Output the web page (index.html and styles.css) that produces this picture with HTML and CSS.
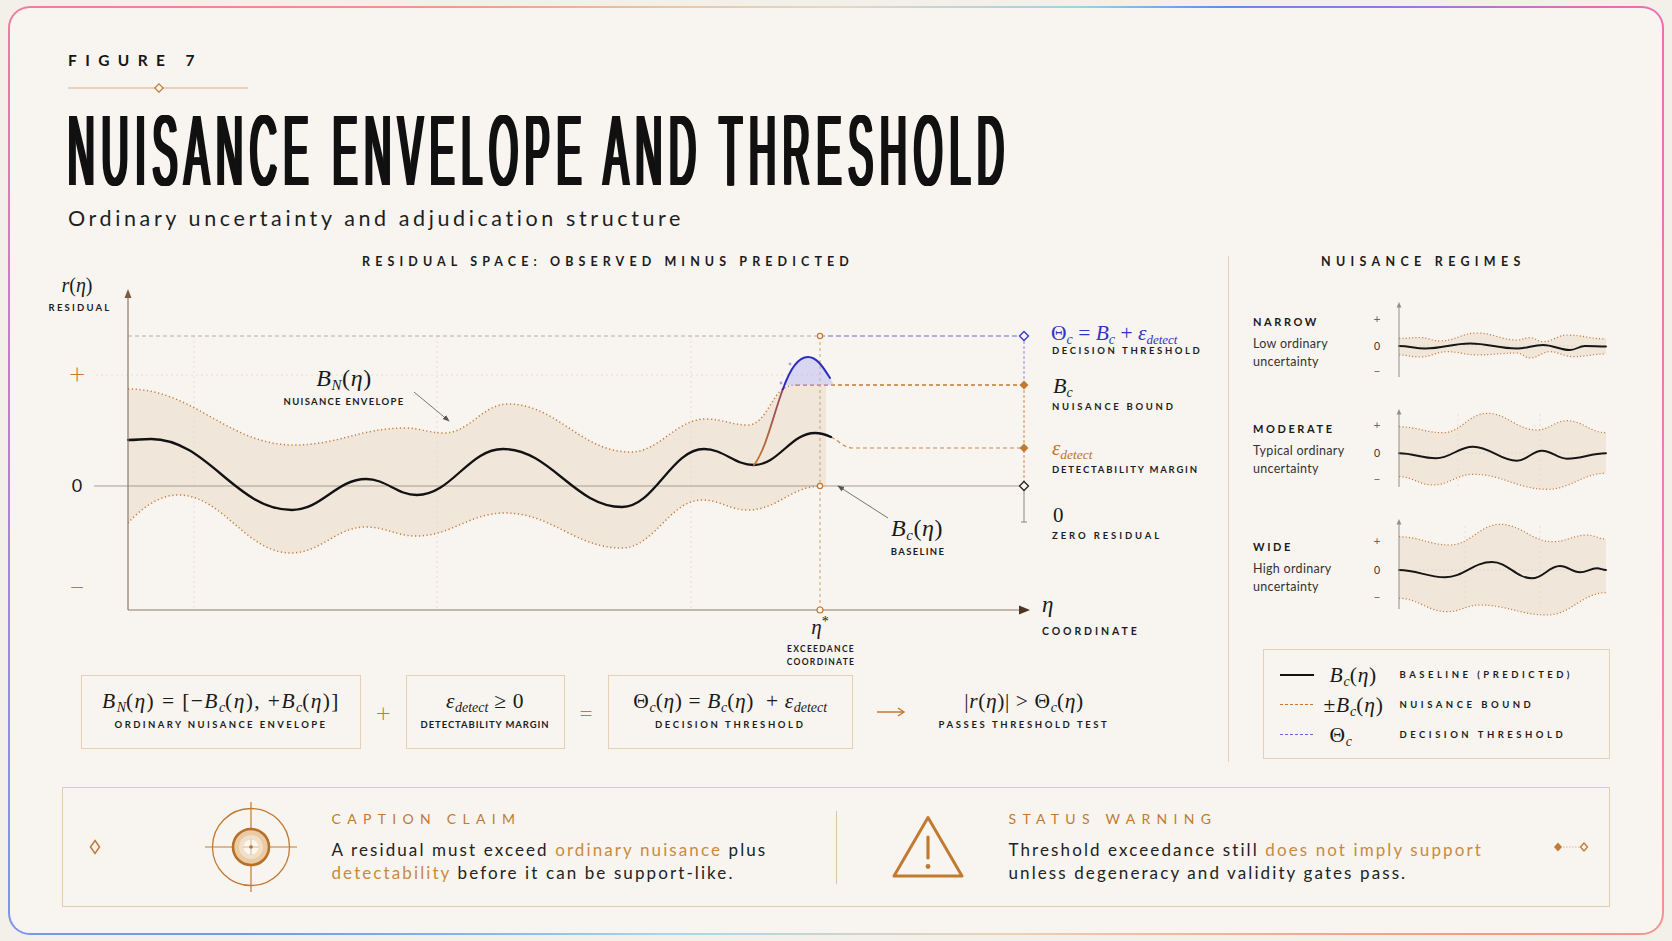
FILE: index.html
```html
<!DOCTYPE html>
<html lang="en">
<head>
<meta charset="utf-8">
<title>Figure 7 — Nuisance Envelope and Threshold</title>
<link rel="stylesheet" href="styles.css">
</head>
<body>
<div class="frame">
  <header class="head">
    <div class="fig-label">FIGURE 7</div>
    <svg class="ornament" width="180" height="10" viewBox="0 0 180 10">
      <line x1="0" y1="5" x2="180" y2="5" stroke="#d8ae80" stroke-width="1.2"/>
      <path d="M91 0.8 L95.2 5 L91 9.2 L86.8 5 Z" fill="#f8f5f1" stroke="#c27a30" stroke-width="1.2"/>
    </svg>
    <h1 class="title">NUISANCE ENVELOPE AND THRESHOLD</h1>
    <p class="subtitle">Ordinary uncertainty and adjudication structure</p>
  </header>

  <main class="main">
    <section class="left">
      <h2 class="chart-title">RESIDUAL SPACE: OBSERVED MINUS PREDICTED</h2>
      <svg class="chart" width="1190" height="398" viewBox="30 272 1190 398">
        <defs>
          <linearGradient id="exg" gradientUnits="userSpaceOnUse" x1="754" y1="465" x2="783" y2="390">
            <stop offset="0" stop-color="#c77a2c"/>
            <stop offset="1" stop-color="#8c4262"/>
          </linearGradient>
          <marker id="ah" viewBox="0 0 8 8" refX="7" refY="4" markerWidth="7" markerHeight="7" markerUnits="userSpaceOnUse" orient="auto">
            <path d="M0 1 L8 4 L0 7 Z" fill="#555"/>
          </marker>
        </defs>

        <g class="grid">
          <line x1="194" y1="336" x2="194" y2="610"/>
          <line x1="437" y1="336" x2="437" y2="610"/>
          <line x1="691" y1="336" x2="691" y2="610"/>
          <line x1="96" y1="375" x2="820" y2="375"/>
        </g>

        <path class="env-fill" d="M128 389 C194.4 389 227.6 445 294 445 C338.4 445 360.6 428 405 428 C420.6 428 428.4 433 444 433 C469.6 433 482.4 404 508 404 C556.8 404 581.2 452 630 452 C660.4 452 675.6 419 706 419 C722.8 419 731.2 425 748 425 C765 425 772 395 783 389 C787 386.5 790 385 796 385 L826 385 L826 486 L821 486 C791.8 486 777.2 510 748 510 C729.6 510 720.4 500 702 500 C670 500 654 548 622 548 C575.2 548 551.8 513 505 513 C469.4 513 451.6 536 416 536 C396 536 386 527 366 527 C336 527 321 553 291 553 C245.8 553 223.2 495 178 495 C158 495 140 510 128 523 Z"/>

        <line class="zero" x1="94" y1="486" x2="1024" y2="486"/>
        <line class="thr-gray" x1="128" y1="336" x2="820" y2="336"/>
        <line class="thr-blue" x1="820" y1="336" x2="1021" y2="336"/>

        <line class="rv-blue" x1="1024" y1="336" x2="1024" y2="385"/>
        <line class="rv-orange" x1="1024" y1="385" x2="1024" y2="486"/>
        <line class="rv-gray" x1="1024" y1="486" x2="1024" y2="522"/>
        <line class="rv-gray" x1="1021" y1="522" x2="1027" y2="522"/>

        <line class="bound" x1="796" y1="385" x2="1021" y2="385"/>
        <path class="eps" d="M831 437 C838 440 844 448 852 448 L1021 448"/>
        <line class="estar" x1="820" y1="336" x2="820" y2="610"/>

        <path class="env" d="M128 389 C194.4 389 227.6 445 294 445 C338.4 445 360.6 428 405 428 C420.6 428 428.4 433 444 433 C469.6 433 482.4 404 508 404 C556.8 404 581.2 452 630 452 C660.4 452 675.6 419 706 419 C722.8 419 731.2 425 748 425 C765 425 772 395 783 389 C787 386.5 790 385 796 385"/>
        <path class="env" d="M128 523 C140 510 158 495 178 495 C223.2 495 245.8 553 291 553 C321 553 336 527 366 527 C386 527 396 536 416 536 C451.6 536 469.4 513 505 513 C551.8 513 575.2 548 622 548 C654 548 670 500 702 500 C720.4 500 729.6 510 748 510 C777.2 510 791.8 486 821 486"/>

        <path class="base" d="M128 440 C137.2 440 141.8 439 151 439 C207.4 439 235.6 510 292 510 C321.6 510 336.4 479 366 479 C386.4 479 396.6 495 417 495 C451.4 495 468.6 449 503 449 C550.6 449 574.4 507 622 507 C654.8 507 671.2 449 704 449 C724 449 734 465 754 465 C778.4 465 790.6 433 815 433 C821.4 433 824.6 434 831 437"/>

        <path class="ex-fill" d="M783 389 C790 369 798 357 808 357 C817 357 823 367 830 378 L834 385 L785 385 Z"/>
        <path class="ex-rise" d="M754 465 C766 450 774 412 783 389"/>
        <path class="ex-blue" d="M783 389 C790 369 798 357 808 357 C817 357 823 367 830 378"/>
        <circle cx="790" cy="364" r="1.4" class="bdot"/>
        <circle cx="781" cy="383" r="1.4" class="bdot"/>

        <line class="axis" x1="128" y1="296" x2="128" y2="610"/>
        <path d="M124.5 298 L128 289 L131.5 298 Z" fill="#7b5c3e"/>
        <line class="axis" x1="128" y1="610" x2="1021" y2="610"/>
        <path d="M1019 605.5 L1030 610 L1019 614.5 Z" fill="#4a3526"/>

        <circle class="mk-o" cx="820" cy="336" r="2.6"/>
        <circle class="mk-o" cx="820" cy="486" r="2.6"/>
        <circle class="mk-o" cx="820" cy="610" r="3"/>
        <path d="M1024 331.5 L1028.5 336 L1024 340.5 L1019.5 336 Z" fill="#f8f5f1" stroke="#3a3acc" stroke-width="1.4"/>
        <path d="M1024 380.5 L1028.5 385 L1024 389.5 L1019.5 385 Z" fill="#c27a30"/>
        <path d="M1024 443.5 L1028.5 448 L1024 452.5 L1019.5 448 Z" fill="#c27a30"/>
        <path d="M1024 481.5 L1028.5 486 L1024 490.5 L1019.5 486 Z" fill="#f8f5f1" stroke="#222" stroke-width="1.3"/>

        <line class="ann" x1="414" y1="392" x2="449" y2="421" marker-end="url(#ah)"/>
        <line class="ann" x1="888" y1="518" x2="838" y2="486" marker-end="url(#ah)"/>

        <text class="m" x="77" y="292" text-anchor="middle" font-size="20">r<tspan class="mu">(</tspan>η<tspan class="mu">)</tspan></text>
        <text class="lbl" x="80" y="310.5" text-anchor="middle">RESIDUAL</text>
        <text class="sign" x="77" y="384" text-anchor="middle">+</text>
        <text class="zero-num" x="77" y="492" text-anchor="middle">0</text>
        <text class="sign" x="77" y="597" text-anchor="middle">−</text>

        <text class="m wide" x="344" y="386" text-anchor="middle" font-size="24">B<tspan font-size="15" dy="4">N</tspan><tspan class="mu" dy="-4">(</tspan>η<tspan class="mu">)</tspan></text>
        <text class="lbl tight" x="344" y="404.5" text-anchor="middle">NUISANCE ENVELOPE</text>

        <text class="m wide" x="917" y="536" text-anchor="middle" font-size="24">B<tspan font-size="15" dy="4">c</tspan><tspan class="mu" dy="-4">(</tspan>η<tspan class="mu">)</tspan></text>
        <text class="lbl tight" x="918" y="554.5" text-anchor="middle">BASELINE</text>

        <text class="m blue" x="1051" y="340" font-size="21.5"><tspan class="mu">Θ</tspan><tspan font-size="14" dy="4">c</tspan><tspan class="mu" dy="-4"> = </tspan>B<tspan font-size="14" dy="4">c</tspan><tspan class="mu" dy="-4"> + </tspan>ε<tspan font-size="13" dy="4">detect</tspan></text>
        <text class="lbl ls-dec" x="1052" y="353.5">DECISION THRESHOLD</text>
        <text class="m" x="1053" y="393" font-size="22">B<tspan font-size="14" dy="4">c</tspan></text>
        <text class="lbl ls-nb" x="1052" y="409.5">NUISANCE BOUND</text>
        <text class="m orange" x="1052" y="455" font-size="21">ε<tspan font-size="13.5" dy="4">detect</tspan></text>
        <text class="lbl ls-dm" x="1052" y="472.5">DETECTABILITY MARGIN</text>
        <text class="serif-num" x="1053" y="522">0</text>
        <text class="lbl ls-zr" x="1052" y="538.5">ZERO RESIDUAL</text>
        <text class="m" x="1042" y="612" font-size="23">η</text>
        <text class="lbl big" x="1042" y="635">COORDINATE</text>

        <text class="m" x="820" y="634" text-anchor="middle" font-size="21">η<tspan class="mu" font-size="14" dy="-8">*</tspan></text>
        <text class="lbl sm" x="821" y="652" text-anchor="middle">EXCEEDANCE</text>
        <text class="lbl sm" x="821" y="665" text-anchor="middle">COORDINATE</text>
      </svg>

      <div class="formula-row">
        <div class="fbox w1">
          <div class="fx"><i>B</i><sub>N</sub>(<i>η</i>) = [−<i>B</i><sub>c</sub>(<i>η</i>), +<i>B</i><sub>c</sub>(<i>η</i>)]</div>
          <div class="flabel">ORDINARY NUISANCE ENVELOPE</div>
        </div>
        <div class="op">+</div>
        <div class="fbox w2">
          <div class="fx"><i>ε</i><sub>detect</sub> ≥ 0</div>
          <div class="flabel">DETECTABILITY MARGIN</div>
        </div>
        <div class="op op-eq">=</div>
        <div class="fbox w3">
          <div class="fx">Θ<sub>c</sub>(<i>η</i>) = <i>B</i><sub>c</sub>(<i>η</i>) &nbsp;+ <i>ε</i><sub>detect</sub></div>
          <div class="flabel">DECISION THRESHOLD</div>
        </div>
        <div class="op-arrow">
          <svg width="30" height="12" viewBox="0 0 30 12"><line x1="1" y1="6" x2="27" y2="6" stroke="#c27a30" stroke-width="1.5"/><path d="M22 2 L28 6 L22 10" fill="none" stroke="#c27a30" stroke-width="1.5"/></svg>
        </div>
        <div class="fresult">
          <div class="fx">|<i>r</i>(<i>η</i>)| &gt; Θ<sub>c</sub>(<i>η</i>)</div>
          <div class="flabel">PASSES THRESHOLD TEST</div>
        </div>
      </div>
    </section>

    <div class="vdivider"></div>

    <section class="right">
      <h2 class="regimes-title">NUISANCE REGIMES</h2>

      <div class="regime r1">
        <div class="reg-text">
          <div class="reg-name">NARROW</div>
          <div class="reg-desc">Low ordinary<br>uncertainty</div>
        </div>
        <svg class="mini" width="240" height="106" viewBox="0 0 240 106">
          <path class="mfill" d="M29 40.3 C37.4 40.3 41.6 39.5 50 39.5 C58 39.5 62 43 70 43 C84.8 43 92.2 35 107 35 C123 35 131 42 147 42 C152.2 42 154.8 39.7 160 39.7 C165.2 39.7 167.8 43.7 173 43.7 C182.6 43.7 187.4 37 197 37 C212.6 37 220.4 41 236 41 L236 56 C222.8 56 216.2 58.7 203 58.7 C193.8 58.7 189.2 53.7 180 53.7 C172 53.7 168 60 160 60 C154.8 60 152.2 55 147 55 C131 55 123 57 107 57 C95 57 89 53.7 77 53.7 C66.2 53.7 60.8 59 50 59 C41.6 59 37.4 57 29 57 Z"/>
          <line class="mzero" x1="29" y1="48" x2="236" y2="48"/>
          <path class="menv" d="M29 40.3 C37.4 40.3 41.6 39.5 50 39.5 C58 39.5 62 43 70 43 C84.8 43 92.2 35 107 35 C123 35 131 42 147 42 C152.2 42 154.8 39.7 160 39.7 C165.2 39.7 167.8 43.7 173 43.7 C182.6 43.7 187.4 37 197 37 C212.6 37 220.4 41 236 41"/>
          <path class="menv" d="M29 57 C37.4 57 41.6 59 50 59 C60.8 59 66.2 53.7 77 53.7 C89 53.7 95 57 107 57 C123 57 131 55 147 55 C152.2 55 154.8 60 160 60 C168 60 172 53.7 180 53.7 C189.2 53.7 193.8 58.7 203 58.7 C216.2 58.7 222.8 56 236 56"/>
          <path class="mbase" d="M29 48 C39.4 48 44.6 50.5 55 50.5 C73 50.5 82 45.5 100 45.5 C118.8 45.5 128.2 50.5 147 50.5 C157.4 50.5 162.6 47 173 47 C183.8 47 189.2 52 200 52 C206 52 209 48 215 48 C223.4 48 227.6 48.5 236 48.5"/>
          <line class="maxis" x1="29" y1="8" x2="29" y2="79"/>
          <path class="marrow" d="M26.6 9.5 L29 4 L31.4 9.5 Z"/>
          <text class="msign" x="7" y="25" text-anchor="middle">+</text>
          <text class="mnum" x="7" y="52" text-anchor="middle">0</text>
          <text class="msign" x="7" y="77" text-anchor="middle">−</text>
        </svg>
      </div>

      <div class="regime r2">
        <div class="reg-text">
          <div class="reg-name">MODERATE</div>
          <div class="reg-desc">Typical ordinary<br>uncertainty</div>
        </div>
        <svg class="mini" width="240" height="110" viewBox="0 0 240 110">
          <path class="mfill" d="M29 22.7 C46.6 22.7 55.4 28.7 73 28.7 C90.6 28.7 99.4 9.3 117 9.3 C137 9.3 147 26 167 26 C179 26 185 16.7 197 16.7 C212.6 16.7 220.4 28.7 236 28.7 L236 69.3 C212.4 69.3 200.6 85.3 177 85.3 C147.4 85.3 132.6 70.3 103 70.3 C87 70.3 79 81 63 81 C49.4 81 42.6 72.7 29 72.7 Z"/>
          <line class="mzero" x1="29" y1="49" x2="236" y2="49"/>
          <line class="mgrid" x1="88" y1="10" x2="88" y2="84"/>
          <line class="mgrid" x1="170" y1="10" x2="170" y2="84"/>
          <path class="menv" d="M29 22.7 C46.6 22.7 55.4 28.7 73 28.7 C90.6 28.7 99.4 9.3 117 9.3 C137 9.3 147 26 167 26 C179 26 185 16.7 197 16.7 C212.6 16.7 220.4 28.7 236 28.7"/>
          <path class="menv" d="M29 72.7 C42.6 72.7 49.4 81 63 81 C79 81 87 70.3 103 70.3 C132.6 70.3 147.4 85.3 177 85.3 C200.6 85.3 212.4 69.3 236 69.3"/>
          <path class="mbase" d="M29 49.3 C43.8 49.3 51.2 54.3 66 54.3 C80.8 54.3 88.2 42.7 103 42.7 C120.6 42.7 129.4 56.7 147 56.7 C157 56.7 162 46.7 172 46.7 C182 46.7 187 54.7 197 54.7 C212.6 54.7 220.4 49.3 236 49.3"/>
          <line class="maxis" x1="29" y1="9" x2="29" y2="83"/>
          <path class="marrow" d="M26.6 10.5 L29 5 L31.4 10.5 Z"/>
          <text class="msign" x="7" y="25" text-anchor="middle">+</text>
          <text class="mnum" x="7" y="53" text-anchor="middle">0</text>
          <text class="msign" x="7" y="79" text-anchor="middle">−</text>
        </svg>
      </div>

      <div class="regime r3">
        <div class="reg-text">
          <div class="reg-name">WIDE</div>
          <div class="reg-desc">High ordinary<br>uncertainty</div>
        </div>
        <svg class="mini" width="240" height="106" viewBox="0 0 240 106">
          <path class="mfill" d="M29 22.7 C49.4 22.7 59.6 31 80 31 C100 31 110 10.3 130 10.3 C151.2 10.3 161.8 27.7 183 27.7 C196.6 27.7 203.4 21 217 21 C224.6 21 228.4 25 236 25 L236 78.7 C212.4 78.7 200.6 101 177 101 C150.2 101 136.8 91 110 91 C96.8 91 90.2 97.7 77 97.7 C57.8 97.7 48.2 84.3 29 84.3 Z"/>
          <line class="mzero" x1="29" y1="56" x2="236" y2="56"/>
          <line class="mgrid" x1="95" y1="12" x2="95" y2="96"/>
          <line class="mgrid" x1="170" y1="12" x2="170" y2="96"/>
          <path class="menv" d="M29 22.7 C49.4 22.7 59.6 31 80 31 C100 31 110 10.3 130 10.3 C151.2 10.3 161.8 27.7 183 27.7 C196.6 27.7 203.4 21 217 21 C224.6 21 228.4 25 236 25"/>
          <path class="menv" d="M29 84.3 C48.2 84.3 57.8 97.7 77 97.7 C90.2 97.7 96.8 91 110 91 C136.8 91 150.2 101 177 101 C200.6 101 212.4 78.7 236 78.7"/>
          <path class="mbase" d="M29 56 C47.4 56 56.6 63.3 75 63.3 C93.8 63.3 103.2 48 122 48 C138 48 146 64.3 162 64.3 C173.2 64.3 178.8 52 190 52 C198 52 202 58.3 210 58.3 C216.8 58.3 220.2 54.3 227 54.3 C230.6 54.3 232.4 56 236 56"/>
          <line class="maxis" x1="29" y1="9" x2="29" y2="95"/>
          <path class="marrow" d="M26.6 10.5 L29 5 L31.4 10.5 Z"/>
          <text class="msign" x="7" y="31" text-anchor="middle">+</text>
          <text class="mnum" x="7" y="60" text-anchor="middle">0</text>
          <text class="msign" x="7" y="87" text-anchor="middle">−</text>
        </svg>
      </div>

      <div class="legend">
        <div class="lg-sample solid"></div>
        <div class="lg-math"><i>B</i><sub>c</sub>(<i>η</i>)</div>
        <div class="lg-label">BASELINE (PREDICTED)</div>
        <div class="lg-sample dotted"></div>
        <div class="lg-math pm">±<i>B</i><sub>c</sub>(<i>η</i>)</div>
        <div class="lg-label">NUISANCE BOUND</div>
        <div class="lg-sample dashed"></div>
        <div class="lg-math">Θ<sub>c</sub></div>
        <div class="lg-label">DECISION THRESHOLD</div>
      </div>
    </section>
  </main>

  <footer class="caption">
    <svg class="cap-diamond" width="12" height="16" viewBox="0 0 12 16">
      <path d="M6 1.5 L10.5 8 L6 14.5 L1.5 8 Z" fill="none" stroke="#c27a30" stroke-width="1.5"/>
    </svg>
    <svg class="target" width="100" height="100" viewBox="0 0 100 100">
      <circle cx="50" cy="50" r="38.5" fill="none" stroke="#c27a30" stroke-width="1.3"/>
      <line x1="4" y1="50" x2="96" y2="50" stroke="#c27a30" stroke-width="1.2"/>
      <line x1="50" y1="5" x2="50" y2="95" stroke="#c27a30" stroke-width="1.2"/>
      <circle cx="50" cy="50" r="18" fill="#e9cba5" stroke="#b86f28" stroke-width="2.6"/>
      <circle cx="50" cy="50" r="12" fill="#f1dfc8"/>
      <circle cx="50" cy="50" r="7.5" fill="#fbf7f1"/>
      <line x1="42" y1="50" x2="58" y2="50" stroke="#d6a878" stroke-width="0.8"/>
      <line x1="50" y1="42" x2="50" y2="58" stroke="#d6a878" stroke-width="0.8"/>
      <circle cx="50" cy="50" r="1.8" fill="#b86f28"/>
    </svg>
    <div class="cap-text c1">
      <div class="cap-label">CAPTION CLAIM</div>
      <p class="cap-body">A residual must exceed <span class="hl">ordinary nuisance</span> plus<br><span class="hl">detectability</span> before it can be support-like.</p>
    </div>
    <div class="cap-div"></div>
    <svg class="warn" width="72" height="64" viewBox="0 0 72 64">
      <path d="M36 2.5 L70 61 L2 61 Z" fill="none" stroke="#c27a30" stroke-width="3" stroke-linejoin="round"/>
      <line x1="36" y1="22" x2="36" y2="43" stroke="#c27a30" stroke-width="3.2" stroke-linecap="round"/>
      <circle cx="36" cy="51.5" r="2.4" fill="#c27a30"/>
    </svg>
    <div class="cap-text c2">
      <div class="cap-label">STATUS WARNING</div>
      <p class="cap-body">Threshold exceedance still <span class="hl">does not imply support</span><br>unless degeneracy and validity gates pass.</p>
    </div>
    <svg class="cap-orn" width="40" height="12" viewBox="0 0 40 12">
      <path d="M6 1.5 L10 6 L6 10.5 L2 6 Z" fill="#c27a30"/>
      <line x1="11" y1="6" x2="28" y2="6" stroke="#d9b48a" stroke-width="1" stroke-dasharray="1.5 1.5"/>
      <path d="M32 2 L35.5 6 L32 10 L28.5 6 Z" fill="#f8f5f1" stroke="#c27a30" stroke-width="1.3"/>
    </svg>
  </footer>
</div>
</body>
</html>
```

FILE: styles.css
```css
* { box-sizing: border-box; }

html, body { margin: 0; padding: 0; }

body {
  background: #f3efe9;
  font-family: Lato, "Open Sans", "DejaVu Sans", sans-serif;
  color: #1c1c1c;
}

.frame {
  margin: 6px 8px;
  width: 1656px;
  height: 929px;
  border: 2px solid transparent;
  border-radius: 22px;
  overflow: hidden;
  background:
    linear-gradient(#f8f5f1, #f8f5f1) padding-box,
    conic-gradient(from 0deg at 50% 50%,
      #e8d6c2 0deg, #9ad3ea 28deg, #5f8fe6 40deg, #9277e2 50deg, #ec6fb2 60deg,
      #f080b4 100deg, #f09c86 125deg, #ead2b8 160deg, #a9d6ea 200deg,
      #6f9cee 232deg, #9f84e6 262deg, #ec77a6 295deg, #f09a88 320deg,
      #ebc6a4 340deg, #e8d6c2 360deg) border-box;
}

/* ---------- header ---------- */
.head { padding: 42px 0 0 58px; }

.fig-label {
  font-size: 15.5px;
  line-height: 20px;
  font-weight: 700;
  letter-spacing: 8.4px;
  color: #161616;
}

.ornament { display: block; margin-top: 13px; }

.title {
  margin: 7px 0 0 -2px;
  font-family: "Liberation Sans", Arial, sans-serif;
  font-weight: 400;
  font-size: 100px;
  line-height: 100px;
  letter-spacing: 19px;
  color: #111;
  white-space: nowrap;
  transform: scaleX(0.37);
  transform-origin: 0 0;
  text-shadow: 2px 0 0 #111, 4px 0 0 #111, 6px 0 0 #111, 8px 0 0 #111, 10px 0 0 #111;
}

.subtitle {
  margin: 5px 0 0;
  font-size: 21.5px;
  line-height: 26px;
  letter-spacing: 3.6px;
  color: #1e1e1e;
  white-space: nowrap;
}

/* ---------- main ---------- */
.main {
  display: flex;
  margin: 23px 0 0 20px;
  height: 508px;
}

.left {
  width: 1198px;
  display: flex;
  flex-direction: column;
}

.chart-title, .regimes-title {
  margin: 0;
  font-size: 12.5px;
  line-height: 16px;
  font-weight: 700;
  letter-spacing: 5.1px;
  color: #1c1c1c;
  white-space: nowrap;
}

.chart-title { text-align: center; padding-right: 42px; }

.chart { display: block; margin-top: 2px; }

/* chart svg styles */
.grid line { stroke: #e6ddd2; stroke-width: 1; stroke-dasharray: 2 3; }
.env-fill { fill: #ecdccb; opacity: 0.6; }
.zero { stroke: #a59d94; stroke-width: 1; }
.thr-gray { stroke: #b5aca3; stroke-width: 1; stroke-dasharray: 4 3; }
.thr-blue { stroke: #6a6ae0; stroke-width: 1.2; stroke-dasharray: 5 3; }
.rv-blue { stroke: #8b8bdc; stroke-width: 1; stroke-dasharray: 3 2; }
.rv-orange { stroke: #c98a4a; stroke-width: 1; stroke-dasharray: 3 2; }
.rv-gray { stroke: #888; stroke-width: 1; }
.bound { stroke: #c27a30; stroke-width: 1.3; stroke-dasharray: 4 3; }
.eps { fill: none; stroke: #c98a4a; stroke-width: 1.2; stroke-dasharray: 4 3; }
.estar { stroke: #c9a070; stroke-width: 1; stroke-dasharray: 3 3; }
.env { fill: none; stroke: #c9772f; stroke-width: 1.5; stroke-dasharray: 1.2 2.6; }
.base { fill: none; stroke: #121212; stroke-width: 2.3; stroke-linecap: round; }
.ex-fill { fill: #b8b8f0; opacity: 0.5; }
.ex-rise { fill: none; stroke: url(#exg); stroke-width: 1.8; stroke-linecap: round; }
.ex-blue { fill: none; stroke: #2b2bc0; stroke-width: 2; stroke-linecap: round; }
.bdot { fill: #8080e0; opacity: 0.7; }
.axis { stroke: #8c7a69; stroke-width: 1.2; }
.mk-o { fill: #f8f5f1; stroke: #c27a30; stroke-width: 1.2; }
.ann { stroke: #555; stroke-width: 0.8; }

.m {
  font-family: "Liberation Serif", "DejaVu Serif", serif;
  font-style: italic;
  fill: #1a1a1a;
}
.m.wide { letter-spacing: 0.6px; }
.mu { font-style: normal; }
.blue { fill: #3434c4; }
.orange { fill: #c0722a; }

.lbl {
  font-family: Lato, "Open Sans", sans-serif;
  font-weight: 700;
  font-size: 9.5px;
  letter-spacing: 2.2px;
  fill: #1d1d1d;
}
.lbl.tight { letter-spacing: 1.3px; }
.lbl.big { font-size: 10.5px; letter-spacing: 2.9px; }
.lbl.sm { font-size: 8.5px; letter-spacing: 1.3px; }
.lbl.ls-dec { letter-spacing: 2.6px; }
.lbl.ls-nb { letter-spacing: 2.7px; }
.lbl.ls-dm { letter-spacing: 1.8px; }
.lbl.ls-zr { letter-spacing: 2.9px; }

.sign {
  font-family: Lato, sans-serif;
  font-weight: 300;
  font-size: 28px;
  fill: #c27a30;
}
.zero-num {
  font-family: Lato, sans-serif;
  font-size: 18px;
  fill: #1a1a1a;
}
.serif-num {
  font-family: "Liberation Serif", "DejaVu Serif", serif;
  font-size: 21px;
  fill: #1a1a1a;
}

/* formula row */
.formula-row {
  display: flex;
  margin-top: 5px;
  height: 74px;
  padding-left: 51px;
}

.fbox {
  height: 74px;
  border: 1.5px solid #e7cfb3;
  display: flex;
  flex-direction: column;
  align-items: center;
  padding-top: 12.5px;
}
.w1 { width: 280px; }
.w2 { width: 159px; }
.w3 { width: 245.5px; }

.fx {
  font-family: "Liberation Serif", "DejaVu Serif", serif;
  font-size: 21.5px;
  line-height: 24px;
  height: 24px;
  letter-spacing: 0.6px;
  white-space: nowrap;
  color: #1a1a1a;
}
.w1 .fx { letter-spacing: 1.4px; }
.fx i, .lg-math i { font-style: italic; }
.fx sub, .lg-math sub {
  font-size: 14px;
  font-style: italic;
  letter-spacing: 0;
  vertical-align: -4px;
  line-height: 0;
}

.flabel {
  margin-top: 5px;
  font-size: 9.5px;
  line-height: 14px;
  font-weight: 700;
  letter-spacing: 2.4px;
  white-space: nowrap;
  color: #1d1d1d;
}
.w2 .flabel { letter-spacing: 0.9px; }
.w3 .flabel { letter-spacing: 2.6px; }

.op {
  width: 44.5px;
  align-self: center;
  text-align: center;
  color: #c27a30;
  font-size: 26px;
  font-weight: 300;
  line-height: 30px;
}
.op-eq { width: 43px; }

.op-arrow {
  width: 76px;
  display: flex;
  justify-content: center;
  align-items: center;
}
.op-arrow svg { display: block; }

.fresult {
  width: 190px;
  display: flex;
  flex-direction: column;
  align-items: center;
  padding-top: 14px;
}
.fresult .flabel { letter-spacing: 2.6px; }

.vdivider {
  width: 1px;
  height: 506px;
  margin-top: 2px;
  background: #e4cfb7;
}

/* ---------- right column ---------- */
.right { flex: 1; padding-left: 24px; }

.regimes-title { margin-left: 68px; letter-spacing: 5.3px; }

.regime { display: flex; }
.r1 { margin-top: 28px; height: 106px; }
.r2 { height: 110px; }
.r3 { height: 106px; }

.reg-text { width: 117px; }
.r1 .reg-text { padding-top: 17px; }
.r2 .reg-text { padding-top: 18px; }
.r3 .reg-text { padding-top: 26px; }

.reg-name {
  font-size: 11px;
  line-height: 14px;
  font-weight: 700;
  letter-spacing: 2.6px;
  color: #1a1a1a;
}
.reg-desc {
  margin-top: 6px;
  font-size: 12.5px;
  line-height: 18px;
  letter-spacing: 0.3px;
  color: #333;
  white-space: nowrap;
}

.mini { display: block; }
.mfill { fill: #ecdccb; opacity: 0.6; }
.mzero { stroke: #e2d8cc; stroke-width: 1; stroke-dasharray: 2 2; }
.mgrid { stroke: #e6ddd2; stroke-width: 1; stroke-dasharray: 2 3; }
.menv { fill: none; stroke: #c9772f; stroke-width: 1.2; stroke-dasharray: 1.1 2.2; }
.mbase { fill: none; stroke: #161616; stroke-width: 1.9; stroke-linecap: round; }
.maxis { stroke: #8f8f8f; stroke-width: 1; }
.marrow { fill: #8f8f8f; }
.msign { font-family: Lato, sans-serif; font-size: 12px; fill: #666; }
.mnum { font-family: Lato, sans-serif; font-size: 10.5px; fill: #333; }

.legend {
  margin: 29px 0 0 9.5px;
  width: 347.5px;
  height: 110px;
  border: 1.5px solid #e7cfb3;
  padding: 9.5px 0 0 16px;
  display: grid;
  grid-template-columns: 34px 86px 1fr;
  grid-auto-rows: 30px;
  align-items: center;
}
.lg-sample { width: 34px; }
.lg-sample.solid { height: 2px; background: #111; }
.lg-sample.dotted {
  height: 1.5px;
  background: repeating-linear-gradient(90deg, #c9772f 0 3px, transparent 3px 5px);
}
.lg-sample.dashed {
  height: 1.5px;
  background: repeating-linear-gradient(90deg, #6a6ae0 0 3px, transparent 3px 5px);
}

.lg-math {
  font-family: "Liberation Serif", "DejaVu Serif", serif;
  font-size: 21.5px;
  line-height: 24px;
  letter-spacing: 0.8px;
  padding-left: 16px;
  white-space: nowrap;
  color: #1a1a1a;
}
.lg-math.pm { padding-left: 10px; }

.lg-label {
  font-size: 9.5px;
  font-weight: 700;
  letter-spacing: 3.5px;
  white-space: nowrap;
  color: #1d1d1d;
}

/* ---------- caption ---------- */
.caption {
  margin: 25px 0 0 52px;
  width: 1548px;
  height: 120px;
  border: 1.5px solid #e4cbad;
  display: flex;
  align-items: center;
}

.cap-diamond { display: block; margin-left: 25.5px; flex: none; }
.target { display: block; margin-left: 100px; flex: none; }
.warn { display: block; margin-left: 55px; flex: none; }
.cap-orn { display: block; margin-left: auto; margin-right: 17px; flex: none; }

.cap-text { flex: none; }
.c1 { margin-left: 31px; width: 470px; }
.c2 { margin-left: 45px; width: 520px; }

.cap-div {
  flex: none;
  margin-left: 34px;
  width: 1px;
  height: 73px;
  background: #dcc2a4;
}

.cap-label {
  font-size: 14px;
  line-height: 18px;
  letter-spacing: 6.3px;
  color: #c27a30;
  white-space: nowrap;
}

.cap-body {
  margin: 10px 0 0;
  font-size: 17px;
  line-height: 23px;
  letter-spacing: 2.1px;
  color: #222;
  white-space: nowrap;
}

.hl { color: #c98a3e; }
```
